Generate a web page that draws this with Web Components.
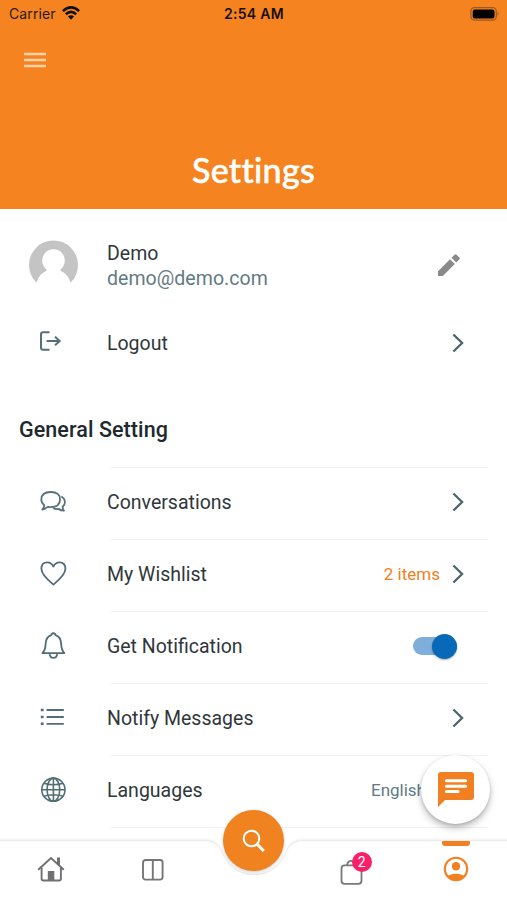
<!DOCTYPE html>
<html lang="en">
<head>
<meta charset="utf-8">
<title>Settings</title>
<style>
html,body{margin:0;height:100%;background:#fff}
body{font-family:Roboto,"Liberation Sans",sans-serif;color:#30373b;overflow:hidden}
</style>
</head>
<body>
<settings-app></settings-app>
<script>
const define = (name, html) => customElements.define(name, class extends HTMLElement {
  constructor() {
    super();
    this.attachShadow({ mode: 'open' }).innerHTML = typeof html === 'function' ? html(this) : html;
  }
});

const glyphs = {
  menu: [24, 18, '<path d="M0 4.500h22M0 10.500h22M0 16.500h22" transform="translate(0 -1.500)" stroke="currentColor" stroke-width="2.500"/>'],
  wifi: [18, 14, '<g fill="none" stroke="#111" stroke-width="2.600"><path d="M.9 5.100Q9-2.200 17.100 5.100"/><path d="M3.800 8.200Q9 3.600 14.200 8.200"/></g><path d="M9 13.700 5.900 10.500Q9 8 12.100 10.500Z" fill="#111"/>'],
  battery: [30, 14, '<rect x=".9" y=".6" width="25.400" height="12.600" rx="3.600" fill="none" stroke="#9b5a24" stroke-width="1.200"/><rect x="2.700" y="2.400" width="21.800" height="9" rx="2" fill="#000"/><path d="M27.600 4.800q2.200 2 0 4Z" fill="#9b5a24"/>'],
  avatar: [50, 50, '<defs><clipPath id="c"><circle cx="25.500" cy="25" r="24.500"/></clipPath></defs><circle cx="25.500" cy="25" r="24.500" fill="#c4c4c4"/><g fill="#fff"><circle cx="25.500" cy="20.500" r="11.300"/><path d="M18.500 28.500h14v6h-14z"/><path d="M8.500 42.500Q11 33.500 19 30.500q6.500 2.500 13 0 8 3 10.500 12L50 50H0Z"/></g>'],
  edit: [24, 24, '<path d="M1 18.200V23h4.800L17.800 11l-4.800-4.800ZM22.300 6.500a1.500 1.500 0 0 0 0-2.100l-2.700-2.700a1.500 1.500 0 0 0-2.100 0l-3 3 4.800 4.800Z" fill="#8a8a8a"/>'],
  logout: [26, 26, '<path d="M10.500 4.300H4q-2 0-2 2v13.500q0 2 2 2h6.500M7.600 13H20.500M16 8.700 20.700 13 16 17.300" fill="none" stroke="#557078" stroke-width="2"/>'],
  next: [14, 20, '<path d="m2 1.500 8.700 8.500L2 18.500" transform="translate(-.6 0)" fill="none" stroke="#4b656d" stroke-width="2.300"/>'],
  chat: [28, 26, '<g fill="none" stroke="#58727b" stroke-width="1.800" stroke-linejoin="round" transform="translate(0 1)"><path d="M7.200 18.700Q5.800 20.400 3.300 20.500 5 18.500 5.300 16.300 2.300 14 2.300 10.600 2.300 3 11.700 3q9.300 0 9.300 7.600t-9.300 7.600q-1.400 0-2.700-.4Z"/><path d="M22.300 7.500q3.600 2 3.600 5.700 0 2.800-2.300 4.800.1 2 1.300 3.700-3.300-.1-5-1.700-3.500.5-5.900-1"/></g>'],
  heart: [28, 26, '<path d="M14 24.300Q2 14.600 2 8.500 2 2 8 2q4 0 6 4.200Q16 2 20 2q6 0 6 6.500Q26 14.600 14 24.300Z" transform="translate(.4 .3)" fill="none" stroke="#526d76" stroke-width="1.800" stroke-linejoin="round"/>'],
  bell: [28, 28, '<g fill="none" stroke="#526d76" stroke-width="1.800" stroke-linejoin="round" transform="translate(.4 .6)"><path d="M3 21.500Q6 18.500 6.200 12.500 6.500 5 12 3.500V2.600q2-1.800 4 0v.9Q21.500 5 21.800 12.500 22 18.500 25 21.500Z"/><path d="M10.200 22.500q.5 3.800 3.800 3.800t3.800-3.800"/></g>'],
  list: [28, 26, '<path d="M7.600 6h17.200M7.600 13h17.200M7.600 19.800h17.200" stroke="#526d76" stroke-width="1.800"/><path d="M1.800 6h2.800M1.800 13h2.800M1.800 19.800h2.800" stroke="#526d76" stroke-width="2.600"/>'],
  globe: [28, 28, '<g fill="none" stroke="#526d76" stroke-width="1.600" transform="translate(.4 .7)"><circle cx="14" cy="14" r="11.600"/><ellipse cx="14" cy="14" rx="6.300" ry="11.600"/><path d="M14 2.400v23.200M2.400 14h23.200M4.300 7.500Q14 10.500 23.700 7.500M4.300 20.500Q14 17.500 23.700 20.500"/></g>'],
  message: [38, 38, '<path d="M4 1h30q3 0 3 3v22q0 3-3 3H8l-7 7V4q0-3 3-3Z" fill="#f08021"/><path d="M9.500 9.800h19M9.500 15.200h19M9.500 20.600h11.500" stroke="#fff" stroke-width="3" stroke-linecap="round"/>'],
  search: [24, 24, '<circle cx="9.500" cy="9.500" r="7.800" fill="none" stroke="#fff" stroke-width="2"/><path d="m15.200 15.300 6.600 6.700" stroke="#fff" stroke-width="2.900"/>'],
  home: [28, 28, '<g fill="none" stroke="#707072" stroke-width="1.900"><path d="M1.200 14.800 14 3l12.800 11.800"/><path d="M4.600 12.500v11.300q0 1.700 1.700 1.700h15.900q1.700 0 1.700-1.700V12.500"/></g><path d="M20 2.400h3v9.200l-3-2.800ZM10.800 16h6.500v9.400h-6.500Z" fill="#707072"/>'],
  columns: [22, 22, '<g fill="none" stroke="#767678" stroke-width="1.900"><rect x="1" y="1" width="19.600" height="19.600" rx="2.500"/><path d="M10.800 1v20"/></g>'],
  bag: [24, 26, '<g fill="none" stroke="#78787a" stroke-width="1.800"><path d="M4.500 6.300h14q3 0 3 3v12.500q0 3-3 3h-14q-3 0-3-3V9.300q0-3 3-3Z"/><path d="M7 6.300q.5-4.500 4.500-4.500t4.500 4.500"/></g>'],
  account: [26, 26, '<defs><clipPath id="a"><circle cx="13" cy="13" r="11"/></clipPath></defs><circle cx="13" cy="13" r="11.200" fill="none" stroke="#f08021" stroke-width="2.100"/><circle cx="13" cy="10.300" r="4.200" fill="#f08021"/><path d="M3 21.500q3.500-3.700 10-3.700t10 3.700V26H3Z" fill="#f08021" clip-path="url(#a)"/>']
};

define('ui-icon', el => {
  const [w, h, art] = glyphs[el.getAttribute('name')];
  return `<style>:host{display:block;flex:none;width:${w}px;height:${h}px}svg{display:block}</style>
  <svg width="${w}" height="${h}" viewBox="0 0 ${w} ${h}">${art}</svg>`;
});

define('status-bar', `<style>
:host{display:grid;grid-template-columns:1fr auto 1fr;align-items:center;height:27px;padding:0 7px 0 9px;color:#281a10;font:400 14px Inter,sans-serif}
.l{display:flex;align-items:center;gap:6px;letter-spacing:.12px}
.l ui-icon{margin-top:-1px}
.t{font-weight:600;color:#17100a;letter-spacing:.3px;margin-left:-1px}
.r{display:flex;justify-content:flex-end}
</style><div class="l">Carrier<ui-icon name="wifi"></ui-icon></div><div class="t">2:54 AM</div><div class="r"><ui-icon name="battery"></ui-icon></div>`);

define('app-header', `<style>
:host{display:flex;flex-direction:column;height:208.500px;background:#f58320;flex:none}
.menu{padding:23.500px 0 0 24px;color:#ffd3a8}
h1{margin:auto 0 18px;text-align:center;color:#fff;font:500 34px/42px Lato,sans-serif;font-variant-ligatures:none;letter-spacing:.3px;-webkit-text-stroke:.5px #fff}
</style><status-bar></status-bar><div class="menu"><ui-icon name="menu"></ui-icon></div><h1><slot></slot></h1>`);

define('profile-row', `<style>
:host{display:flex;align-items:center;height:82px;padding:15px 46px 1px 28px;font-size:19.500px;line-height:24.500px;box-sizing:content-box}
.text{flex:1;padding:4px 0 0 29px}
.mail{color:#627a84;letter-spacing:.05px}
</style><ui-icon name="avatar"></ui-icon><div class="text"><div class="name"><slot name="name"></slot></div><div class="mail"><slot></slot></div></div><ui-icon name="edit"></ui-icon>`);

define('setting-row', el => {
  const plain = el.hasAttribute('plain');
  return `<style>
:host{display:flex;align-items:center;height:72px;box-sizing:border-box;padding:0 41px 0 39px;font-size:19.500px;
background:${plain ? 'none' : 'linear-gradient(#f1f1f1,#f1f1f1) 111px 1px/377px 1px no-repeat'}}
.icon{width:68px;padding-bottom:${plain ? 4 : 3}px}
.label{flex:1;padding-top:${plain ? 2 : 0}px}
::slotted([slot=end]){font-size:17px;margin-right:var(--end-gap,12px)}
</style><div class="icon"><ui-icon name="${el.getAttribute('icon')}"></ui-icon></div><div class="label"><slot></slot></div><slot name="end"></slot>${el.hasAttribute('control') ? '' : '<ui-icon name="next"></ui-icon>'}`;
});

define('section-title', `<style>:host{display:block;padding:35px 19px 21.500px;font-size:21.500px;line-height:31px;font-weight:500;letter-spacing:.08px;color:#20292d}</style><slot></slot>`);

define('toggle-switch', `<style>
:host{display:flex;align-items:center;justify-content:flex-end;width:44px;height:18px;border-radius:9px;background:#7faedb}
i{width:25px;height:25px;border-radius:50%;background:#0869b8;box-shadow:0 1px 2px #0005;flex:none}
</style><i></i>`);

define('chat-button', `<style>
:host{display:flex;align-items:center;justify-content:center;width:69px;height:69px;border-radius:50%;background:#fff;box-shadow:0 4px 7px #0004,0 1px 3px #0002}
</style><ui-icon name="message"></ui-icon>`);

define('tab-bar', `<style>
:host{display:block;height:60px;position:relative}
.shape{position:absolute;left:0;top:-10px;display:block}
nav{position:relative;display:grid;grid-template-columns:repeat(5,1fr);height:60px}
.tab{display:flex;justify-content:center;align-items:center;position:relative;padding-bottom:2px}
.tab:nth-child(2){padding:0 0 0 2px}
.search{position:absolute;left:50%;top:-30px;width:61px;height:61px;margin-left:-30px;border-radius:50%;background:#f18220;display:flex;align-items:center;justify-content:center;box-shadow:0 1px 3px #0003}
.badge{position:absolute;left:47.500px;top:12px;width:20px;height:20px;border-radius:50%;background:#f82068;color:#fff;font-size:14px;line-height:20px;text-align:center}
.mark{position:absolute;top:1px;left:36.500px;width:28px;height:5px;border-radius:1px 1px 3px 3px;background:#f08021}
.tab.bag{padding:4px 5px 0 0}
</style>
<svg class="shape" width="507" height="70"><defs><filter id="s" x="-5%" y="-20%" width="110%" height="140%"><feDropShadow dx="0" dy="-1" stdDeviation="1.500" flood-opacity=".15"/></filter></defs><path filter="url(#s)" fill="#fff" d="M-10 11.500H207Q217 12 221 22 231 45.500 254 45.500T287 22Q291 12 301 11.500H517V80H-10Z"/></svg>
<nav>
<div class="tab"><ui-icon name="home"></ui-icon></div>
<div class="tab"><ui-icon name="columns"></ui-icon></div>
<div class="tab"><div class="search"><ui-icon name="search"></ui-icon></div></div>
<div class="tab bag"><ui-icon name="bag"></ui-icon><span class="badge">2</span></div>
<div class="tab"><span class="mark"></span><ui-icon name="account"></ui-icon></div>
</nav>`);

define('settings-app', `<style>
:host{display:flex;flex-direction:column;height:900px;width:507px;position:relative;overflow:hidden;background:#fff}
main{flex:1;min-height:0;overflow:hidden}
chat-button{position:absolute;left:421px;top:755px}
.items{color:#f08021}
.lang{color:#627a84}
.toggle{--end-gap:9px}
.language{--end-gap:40px}
</style>
<app-header>Settings</app-header>
<main>
<profile-row><span slot="name">Demo</span>demo@demo.com</profile-row>
<setting-row icon="logout" plain>Logout</setting-row>
<section-title>General Setting</section-title>
<setting-row icon="chat">Conversations</setting-row>
<setting-row icon="heart">My Wishlist<span slot="end" class="items">2 items</span></setting-row>
<setting-row class="toggle" icon="bell" control>Get Notification<toggle-switch slot="end"></toggle-switch></setting-row>
<setting-row icon="list">Notify Messages</setting-row>
<setting-row class="language" icon="globe" control>Languages<span slot="end" class="lang">English</span></setting-row>
<setting-row icon="list"></setting-row>
</main>
<tab-bar></tab-bar>
<chat-button></chat-button>`);
</script>
</body>
</html>
